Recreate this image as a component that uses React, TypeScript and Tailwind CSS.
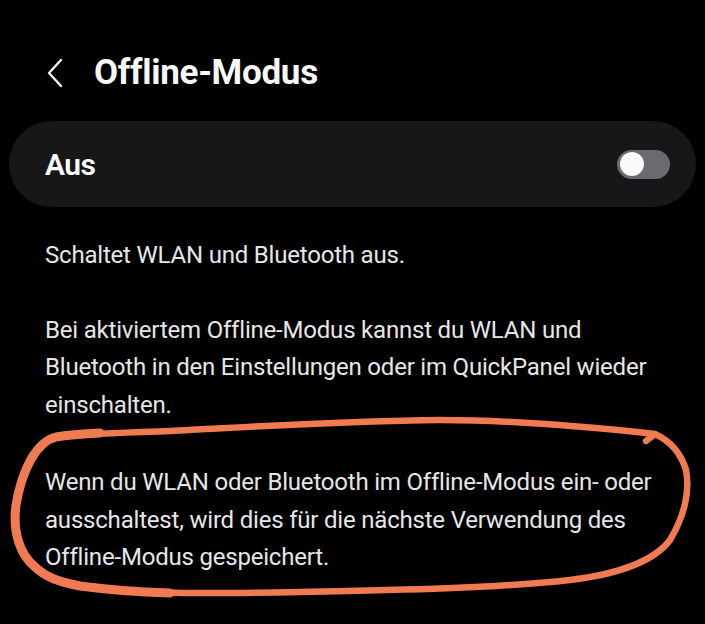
import React, { useState } from "react";

export default function App() {
  const [on, setOn] = useState(false);

  return (
    <div className="relative w-[705px] h-[624px] bg-black text-white overflow-hidden font-['Roboto','Noto_Sans',sans-serif]">
      {/* Header */}
      <div className="flex items-center h-[58px] mt-[44px] pl-[44px]">
        <svg width="22" height="32" viewBox="0 0 22 32" fill="none" className="shrink-0">
          <path d="M17 3 L5 16 L17 29" stroke="#f2f2f2" strokeWidth="2.4" strokeLinecap="round" strokeLinejoin="round" />
        </svg>
        <h1 className="ml-[28px] text-[35px] font-bold tracking-[-0.3px] text-[#f7f7f7]">Offline-Modus</h1>
      </div>

      {/* Toggle card */}
      <div className="mx-[9px] mt-[19px] h-[86px] rounded-[43px] bg-[#171719] flex items-center justify-between pl-[36px] pr-[26px]">
        <span className="text-[30px] font-semibold text-white tracking-[-0.5px]">Aus</span>
        <button
          onClick={() => setOn(!on)}
          className="w-[53px] h-[29px] rounded-full bg-[#6a6a6f] flex items-center px-[3px]"
        >
          <span className="block w-[24px] h-[24px] rounded-full bg-[#fafafc]" />
        </button>
      </div>

      {/* Description */}
      <div className="pl-[45px] pr-[10px] pt-[30px] text-[24px] leading-[37.5px] tracking-[-0.2px] text-[#e6e6e6]">
        <p>Schaltet WLAN und Bluetooth aus.</p>
        <p className="mt-[37px]">
          Bei aktiviertem Offline-Modus kannst du WLAN und
          <br />
          Bluetooth in den Einstellungen oder im QuickPanel wieder
          <br />
          einschalten.
        </p>
        <p className="mt-[40px]">
          Wenn du WLAN oder Bluetooth im Offline-Modus ein- oder
          <br />
          ausschaltest, wird dies für die nächste Verwendung des
          <br />
          Offline-Modus gespeichert.
        </p>
      </div>

      {/* hand-drawn annotation */}
      <svg className="absolute left-0 top-0 pointer-events-none" width="705" height="624" viewBox="0 0 705 624" fill="none">
        <g stroke="#f07a52" strokeLinecap="round" strokeLinejoin="round">
          <path
            strokeWidth="6.5"
            d="M646 441 L655 434 C600 428 520 420 440 420 C340 421 250 427 170 431 C120 433 80 434 56 437 C36 442 22 470 16 505 C12 535 22 556 34 566 C46 578 60 582 80 586 C140 594 200 594 300 592 C400 590 500 588 570 580 C620 574 655 560 670 540 C685 515 690 490 686 470 C680 450 668 440 655 434"
          />
          <path
            strokeWidth="9"
            d="M100 433 C80 434 68 435 56 437 C36 442 22 470 16 505 C12 535 22 556 34 566 C46 578 60 582 80 586 C110 590 140 592 170 593"
          />
        </g>
      </svg>
    </div>
  );
}
